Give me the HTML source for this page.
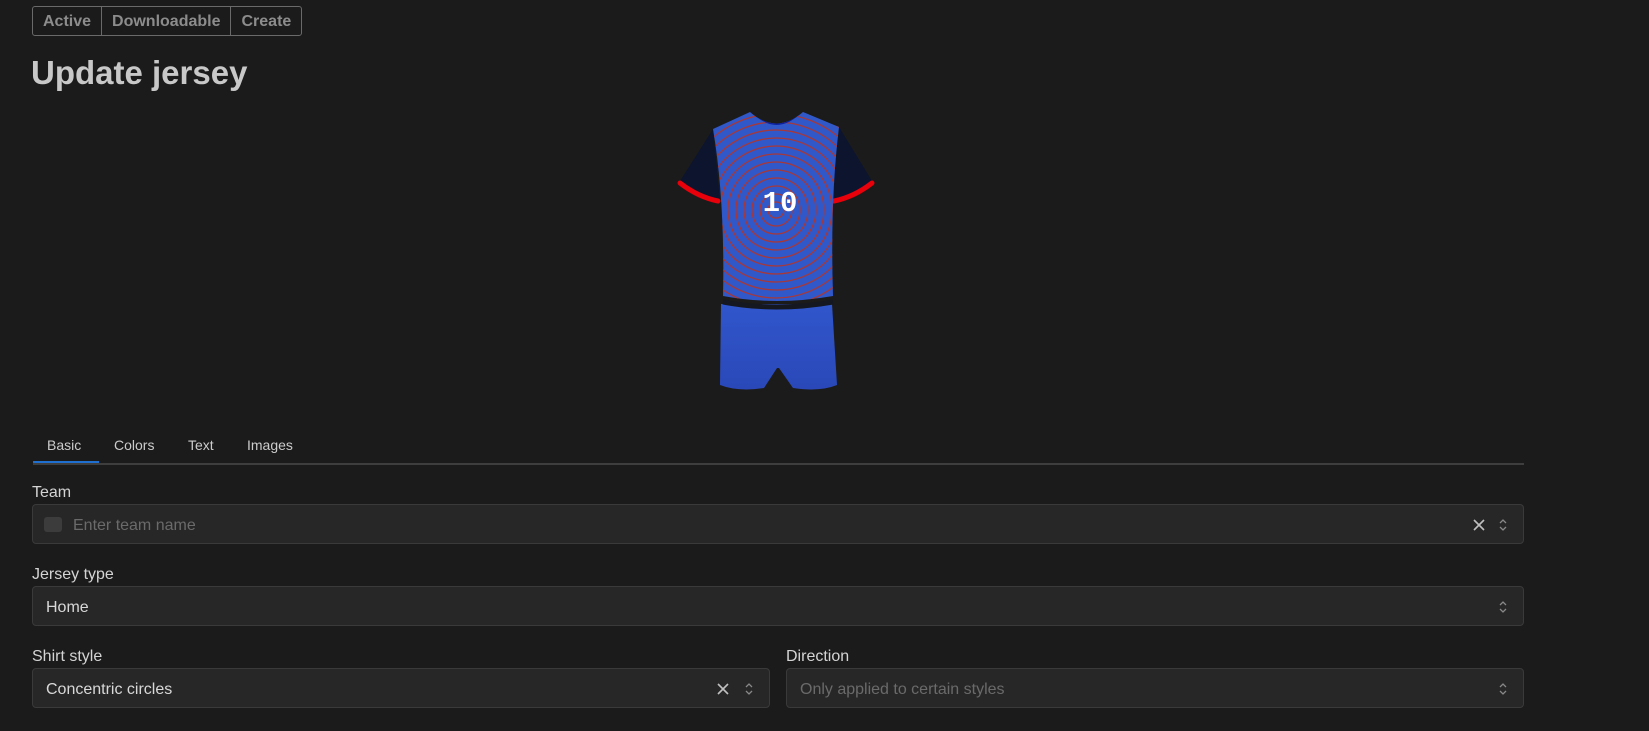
<!DOCTYPE html>
<html><head><meta charset="utf-8"><style>
body{margin:0;background:#1b1b1b;width:1649px;height:731px;overflow:hidden;font-family:"Liberation Sans",sans-serif;color:#d0d0d0;position:relative}
.seg{position:absolute;left:32px;top:6px;height:28px;display:flex;border:1px solid #6a6a6a;border-radius:3px}
.seg div{padding:0 10px;line-height:30px;font-size:16px;font-weight:bold;color:#8c8c8c;border-right:1px solid #6a6a6a}
.seg div:last-child{border-right:none}
h1{position:absolute;left:31px;top:54px;margin:0;font-size:33px;color:#c8c8c8;font-weight:bold}
.tabs{position:absolute;left:33px;top:430px;width:1491px;height:33px;border-bottom:2px solid #3e3e3e}
.tab{position:absolute;top:7px;font-size:14px;color:#ccc}
.ul{position:absolute;left:0;top:31px;width:66px;height:2px;background:#1f6fd0}
.lbl{position:absolute;font-size:16px;color:#d4d4d4}
.f{position:absolute;height:40px;background:#272727;border:1px solid #3a3a3a;border-radius:4px;box-sizing:border-box;font-size:16px;line-height:42px;padding-left:13px;color:#d8d8d8}
.ph{color:#6a6a6a}
.x{position:absolute;top:13px;width:14px;height:14px}
.ch{position:absolute;top:13px;width:10px;height:14px}
</style></head><body>
<div class="seg"><div>Active</div><div>Downloadable</div><div>Create</div></div>
<h1>Update jersey</h1>
<svg style="position:absolute;left:0;top:0" width="1649" height="731">
<defs>
<clipPath id="b"><path d="M713,129 L750,112 Q776,135 803,112 L839,127 Q830,200 833,296 Q776,306 723,296 Q725,200 713,129Z"/></clipPath>
<linearGradient id="sg" x1="0" y1="0" x2="0" y2="1"><stop offset="0" stop-color="#3056cc"/><stop offset="1" stop-color="#2a48b8"/></linearGradient>
</defs>
<path d="M713,129 L680,181 Q698,196 720,201 Z" fill="#0c142e"/>
<path d="M839,127 L872,181 Q854,196 832,201 Z" fill="#0c142e"/>
<path d="M680,183 Q698,197 718,201" stroke="#e8000a" stroke-width="5" fill="none" stroke-linecap="round"/>
<path d="M872,183 Q854,197 834,201" stroke="#e8000a" stroke-width="5" fill="none" stroke-linecap="round"/>
<path d="M721,304 L832,304 L837,385 Q820,392 793,388 L779,368 L777,368 L764,388 Q738,392 720,385Z" fill="url(#sg)"/>
<g clip-path="url(#b)">
<rect x="700" y="100" width="150" height="210" fill="#3158c8"/>
<g fill="none" stroke="#a83838" stroke-width="1.3">
<circle cx="776" cy="210" r="8"/><circle cx="776" cy="210" r="16"/><circle cx="776" cy="210" r="24"/><circle cx="776" cy="210" r="32"/><circle cx="776" cy="210" r="40"/><circle cx="776" cy="210" r="48"/><circle cx="776" cy="210" r="56"/><circle cx="776" cy="210" r="64"/><circle cx="776" cy="210" r="72"/><circle cx="776" cy="210" r="80"/><circle cx="776" cy="210" r="88"/><circle cx="776" cy="210" r="96"/><circle cx="776" cy="210" r="104"/><circle cx="776" cy="210" r="112"/>
</g>
<path d="M748,108 Q776,142 806,108Z" fill="#0c1fa0"/>
</g>
<path d="M723,302 Q776,312 833,302" stroke="#151820" stroke-width="5" fill="none"/>
<text x="780" y="211" text-anchor="middle" font-family="Liberation Mono,monospace" font-weight="bold" font-size="29" fill="#fff">10</text>
</svg>
<div class="tabs"><span class="tab" style="left:14px">Basic</span><span class="tab" style="left:81px">Colors</span><span class="tab" style="left:155px">Text</span><span class="tab" style="left:214px">Images</span><div class="ul"></div></div>
<div class="lbl" style="left:32px;top:484px">Team</div>
<div class="f" style="left:32px;top:504px;width:1492px;padding-left:40px"><span style="position:absolute;left:11px;top:12px;width:18px;height:15px;background:#3c3c3c;border-radius:3px"></span><span class="ph">Enter team name</span><svg class="x" style="left:1439px" viewBox="0 0 14 14"><path d="M2,2 L12,12 M12,2 L2,12" stroke="#c0c0c0" stroke-width="1.6"/></svg><svg class="ch" style="left:1465px" viewBox="0 0 10 14"><path d="M2,5 L5,2 L8,5 M2,9 L5,12 L8,9" stroke="#888" fill="none" stroke-width="1.3"/></svg></div>
<div class="lbl" style="left:32px;top:566px">Jersey type</div>
<div class="f" style="left:32px;top:586px;width:1492px">Home<svg class="ch" style="left:1465px" viewBox="0 0 10 14"><path d="M2,5 L5,2 L8,5 M2,9 L5,12 L8,9" stroke="#888" fill="none" stroke-width="1.3"/></svg></div>
<div class="lbl" style="left:32px;top:648px">Shirt style</div>
<div class="f" style="left:32px;top:668px;width:738px">Concentric circles<svg class="x" style="left:683px" viewBox="0 0 14 14"><path d="M2,2 L12,12 M12,2 L2,12" stroke="#c0c0c0" stroke-width="1.6"/></svg><svg class="ch" style="left:711px" viewBox="0 0 10 14"><path d="M2,5 L5,2 L8,5 M2,9 L5,12 L8,9" stroke="#888" fill="none" stroke-width="1.3"/></svg></div>
<div class="lbl" style="left:786px;top:648px">Direction</div>
<div class="f" style="left:786px;top:668px;width:738px"><span class="ph">Only applied to certain styles</span><svg class="ch" style="left:711px" viewBox="0 0 10 14"><path d="M2,5 L5,2 L8,5 M2,9 L5,12 L8,9" stroke="#888" fill="none" stroke-width="1.3"/></svg></div>
</body></html>
